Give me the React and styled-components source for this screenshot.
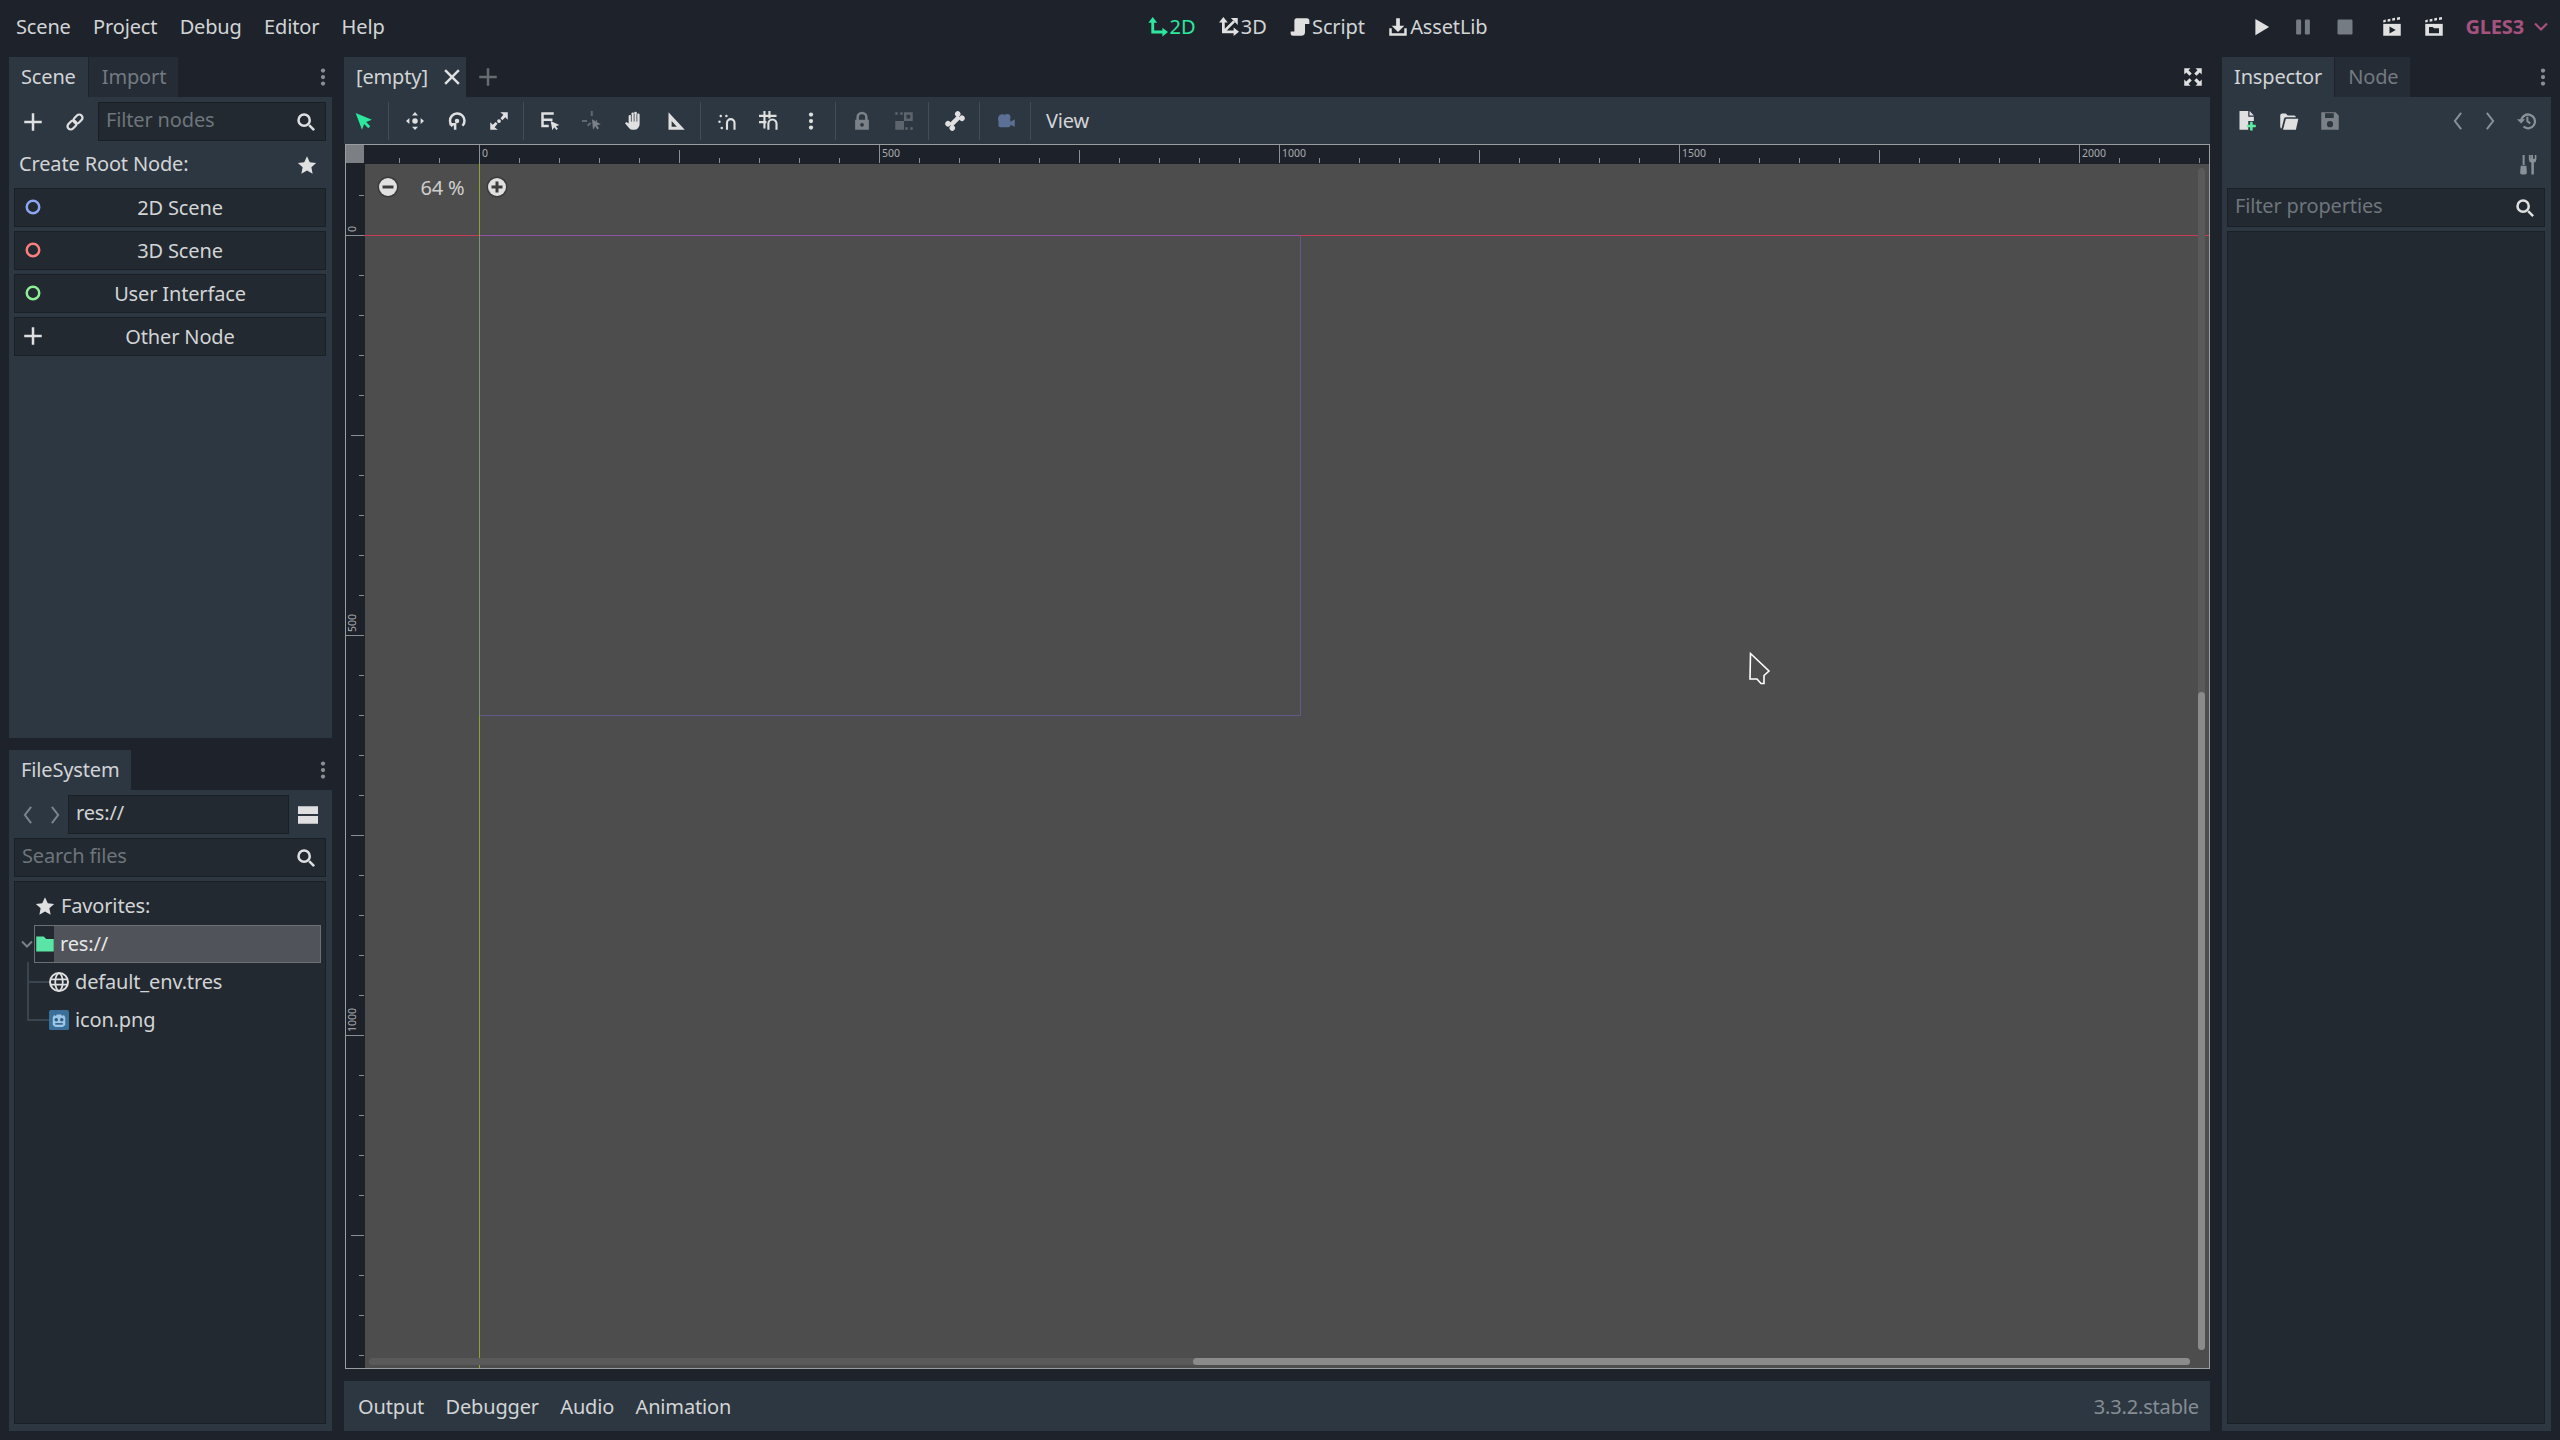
import React from 'react';
import styled, { createGlobalStyle } from 'styled-components';

const BG = '#1e232b';
const PANEL = '#2d3741';
const FIELD = '#222930';
const LINE = '#1a1e25';
const TXT = '#d2d4d6';
const DIM = '#737a81';
const ACCENT = '#2ce89f';

const Global = createGlobalStyle`
  html, body { margin: 0; padding: 0; background: ${BG}; }
  body { font-family: "Noto Sans", "Open Sans", sans-serif; font-size: 20px; letter-spacing: -0.15px; color: ${TXT}; }
  * { box-sizing: border-box; }
`;

const Page = styled.div`
  width: 2560px; height: 1440px; display: flex; flex-direction: column; overflow: hidden; background: ${BG};
`;
const TopBar = styled.header`
  height: 57px; flex: none; display: grid; grid-template-columns: 1fr auto 1fr; align-items: center; padding: 0 11px 4px 16px;
`;
const Menu = styled.nav`display: flex; gap: 22.3px;`;
const MenuItem = styled.span`line-height: 28px;`;
const Modes = styled.div`display: flex; gap: 23.5px; margin-left: 70px;`;
const Mode = styled.span`
  display: flex; align-items: center; gap: 2px; line-height: 28px; color: ${p => (p.$on ? ACCENT : TXT)};
`;
const RunBar = styled.div`display: flex; justify-content: flex-end; align-items: center;`;
const RunBtn = styled.span`
  width: 42px; margin-left: ${p => p.$gap || 0}px; display: flex; justify-content: center; align-items: center;
`;
const Driver = styled.span`
  display: flex; align-items: center; gap: 9px; margin-left: 10px; font-weight: 700; color: #a5527f;
`;
const Work = styled.main`
  flex: 1; min-height: 0; display: grid; grid-template-columns: 323px 1866px 329px; gap: 12px; padding: 0 9px 9px;
`;
const Column = styled.section`display: flex; flex-direction: column; gap: ${p => p.$gap ?? 12}px; min-height: 0;`;
const Dock = styled.div`display: flex; flex-direction: column; flex: 1; min-height: 0;`;
const TabRow = styled.div`height: 40px; flex: none; display: flex; align-items: stretch; position: relative;`;
const Tab = styled.span`
  display: flex; align-items: center; padding: 0 ${p => p.$pr ?? 12}px 0 ${p => (p.$on ? 12 : 13)}px; margin-right: 1px; gap: 14px; line-height: 28px;
  background: ${p => (p.$on ? PANEL : '#262c35')};
  color: ${p => (p.$on ? TXT : DIM)};
`;
const TabFill = styled.span`
  flex: 1; display: flex; align-items: center; justify-content: flex-end; margin-right: ${p => p.$mr ?? 0}px;
`;
const DockBody = styled.div`
  flex: 1; min-height: 0; background: ${PANEL}; padding: 5px 6px 7px 5px; display: flex; flex-direction: column; gap: 4px;
`;
const Row = styled.div`display: flex; align-items: center; height: 39px; flex: none;`;
const ToolSlot = styled.span`
  width: ${p => p.$w}px; flex: none; display: flex; justify-content: center; align-items: center;
`;
const Field = styled.div`
  flex: 1; height: 39px; display: flex; align-items: center; justify-content: space-between;
  background: ${FIELD}; border: 1px solid ${LINE}; padding: 0 9px 3px 7px; line-height: 28px;
  color: ${p => (p.$value ? TXT : '#6e757c')};
  & > svg { margin-top: 3px; }
`;
const RootHead = styled.div`
  height: 40px; flex: none; display: flex; align-items: center; justify-content: space-between; padding: 0 9px 3px 5px; margin-bottom: -1px;
  & > svg { margin-top: 3px; }
`;
const RootBtn = styled.button`
  height: 39px; flex: none; position: relative; width: 100%; font: inherit; letter-spacing: inherit; color: ${TXT};
  background: ${FIELD}; border: 1px solid ${LINE}; padding: 0 0 0 20px; line-height: 28px; text-align: center;
`;
const RootIcon = styled.span`
  position: absolute; left: 8px; top: 8px; display: flex;
`;
const Tree = styled.div`
  flex: 1; min-height: 0; background: ${FIELD}; border: 1px solid ${LINE}; padding: 5px 4px 0 0; display: flex; flex-direction: column;
`;
const TreeRow = styled.div`
  height: 38px; flex: none; display: flex; align-items: center; position: relative; line-height: 28px;
  padding-left: ${p => p.$indent}px; gap: 6px;
`;
const Selected = styled.div`
  height: 38px; flex: none; margin-left: 19px; display: flex; align-items: center; background: #50545a; border: 1px solid #6c7075;
  color: #e6e7e8; line-height: 28px; position: relative;
`;
const FolderCell = styled.span`
  width: 19px; align-self: stretch; flex: none; background: ${FIELD}; display: flex; align-items: center; justify-content: center;
`;
const SelectedLabel = styled.span`margin-left: 6px;`;
const Expander = styled.span`position: absolute; left: -16px; top: 10px; display: flex;`;
const Guide = styled.span`
  position: absolute; left: 12px; top: ${p => p.$top}px; height: ${p => p.$h}px; width: 22px;
  border-left: 2px solid #3a444e; border-bottom: 2px solid #3a444e;
`;
const Toolbar = styled.div`height: 47px; flex: none; background: ${PANEL}; display: flex; align-items: center;`;
const ToolBtn = styled.span`
  width: ${p => p.$w || 42}px; flex: none; display: flex; justify-content: center; align-items: center;
`;
const Sep = styled.span`
  width: 9px; height: 38px; flex: none; display: block; position: relative;
  &::before { content: ''; display: block; width: 1px; height: 100%; margin-left: 3px; background: #434d57; }
`;
const ViewBtn = styled.span`padding-left: 10px; line-height: 28px;`;
const Viewport = styled.div`
  flex: 1; min-height: 0; position: relative; background: #4d4d4d; overflow: hidden; margin-left: 1px;
`;
const CanvasArt = styled.svg`display: block; width: 100%; height: 100%;`;
const RulerLabel = styled.text`
  font-family: "Noto Sans", sans-serif; font-size: 10.5px; letter-spacing: 0; fill: #a9acaf;
`;
const ZoomBox = styled.div`
  position: absolute; left: 32px; top: 32px; display: flex; align-items: center; color: #cfcfcf;
`;
const ZoomText = styled.span`width: 87px; text-align: center; line-height: 20px; margin-top: 1px;`;
const ScrollTrack = styled.div`
  position: absolute; background: #5a5a5a; border-radius: 4px;
  ${p => (p.$v
    ? 'right: 5px; top: 24px; bottom: 19px; width: 7px;'
    : 'left: 24px; right: 20px; bottom: 4px; height: 7px;')}
`;
const ScrollThumb = styled.div`
  position: absolute; background: #8b8b8b; border-radius: 4px;
  ${p => (p.$v
    ? 'left: 0; right: 0; top: 524px; bottom: 0;'
    : 'top: 0; bottom: 0; left: 824px; right: 0;')}
`;
const BottomBar = styled.footer`
  height: 50px; flex: none; margin-top: 12px; background: ${PANEL}; display: flex; align-items: center; padding: 2px 11px 0 14px; gap: 21.3px; line-height: 28px;
`;
const Version = styled.span`margin-left: auto; color: #878d94;`;
const InspectorRow = styled.div`
  display: flex; align-items: center; height: 40px; flex: none; margin: ${p => (p.$tight ? '-1px -3px -1px 0' : '-1px -3px 1px -1px')};
`;
const Spacer = styled.span`flex: 1;`;
const InspectorList = styled.div`
  flex: 1; min-height: 0; background: ${FIELD}; border: 1px solid ${LINE};
`;

const Svg = styled.svg`display: block; flex: none;`;
const Icon = ({ size = 20, children, color = '#e0e0e0' }) => (
  <Svg width={size} height={size} viewBox="0 0 16 16" fill={color} stroke="none">{children}</Svg>
);

const Plus = ({ color }) => <Icon color={color}><path d="M7 1h2v6h6v2H9v6H7V9H1V7h6z" /></Icon>;
const Dots = ({ color = '#8a8f94' }) => (
  <Icon color={color}><circle cx="8" cy="2.8" r="1.7" /><circle cx="8" cy="8" r="1.7" /><circle cx="8" cy="13.2" r="1.7" /></Icon>
);
const Search = () => (
  <Icon>
    <circle cx="6.5" cy="6.5" r="4.5" fill="none" stroke="#e0e0e0" strokeWidth="2" />
    <path d="M9.8 11.2l1.4-1.4 4 4-1.4 1.4z" />
  </Icon>
);
const Star = () => <Icon><path d="M8 1l2.2 4.7 5.1.6-3.8 3.5 1 5.1L8 12.4l-4.5 2.5 1-5.1L.7 6.3l5.1-.6z" /></Icon>;
const Ring = ({ color }) => (
  <Icon><circle cx="8" cy="8" r="5" fill="none" stroke={color} strokeWidth="2" /></Icon>
);
const LinkIcon = () => (
  <Icon>
    <g fill="none" stroke="#e0e0e0" strokeWidth="1.8" transform="rotate(-45 8 8)">
      <rect x="0.6" y="5.4" width="8" height="5.2" rx="2.6" />
      <rect x="7.4" y="5.4" width="8" height="5.2" rx="2.6" />
    </g>
  </Icon>
);
const Chev = ({ left, color = '#7d848b' }) => (
  <Icon color={color}>
    <path d={left ? 'M10.5 1.5L5.5 8l5 6.5' : 'M5.5 1.5l5 6.5-5 6.5'} fill="none" stroke={color} strokeWidth="1.6" />
  </Icon>
);
const Close = () => (
  <Icon><path d="M3.2 1.8L8 6.6l4.8-4.8 1.4 1.4L9.4 8l4.8 4.8-1.4 1.4L8 9.4l-4.8 4.8-1.4-1.4L6.6 8 1.8 3.2z" /></Icon>
);
const Arrow = () => <Icon color={ACCENT}><path d="M.5 1.5l13 5.5-4.6 1.7 3.3 3.4-1.6 1.6-3.3-3.3L5.6 15z" /></Icon>;
const Move = () => (
  <Icon>
    <path d="M8 .8l2.4 2.7H5.6zM8 15.2l-2.4-2.7h4.8zM.8 8l2.7-2.4v4.8zM15.2 8l-2.7 2.4V5.6z" />
    <circle cx="8" cy="8" r="2.2" />
  </Icon>
);
const Rotate = () => (
  <Icon>
    <path d="M4.4 12.2A5.8 5.8 0 1 1 12.4 11.8" fill="none" stroke="#e0e0e0" strokeWidth="2" />
    <circle cx="8" cy="8" r="1.8" />
    <path d="M2 9.5h5.5V15H5.5v-3.5H2z" />
  </Icon>
);
const Scale = () => (
  <Icon>
    <path d="M9 1h6v6l-2-2-2.3 2.3-1.5-1.5L11.5 3zM1 15V9l2 2 2.3-2.3 1.5 1.5L4.5 13l2.5 2z" />
    <circle cx="8" cy="8" r="1.5" />
  </Icon>
);
const ListPick = () => (
  <Icon>
    <path d="M1 1h10v2H3v3h7v2H3v3h4v2H1z" />
    <path d="M8.5 8l7 3.2-2.8 1 1.6 2-1.2 1-1.7-2.2-1.5 2.3z" />
  </Icon>
);
const PickDim = () => (
  <Icon color="#61686f">
    <path d="M7 0h1.6v4H7zM0 7.2h4v1.6H0zM11 7.2h1v1.6h-1zM4 11l2.4-2 1.1 1.2L5 12.4z" />
    <path d="M8 6.5l7 4-3 .8 1.6 2.5-1.4.9-1.6-2.5L8.8 15z" fill="#7a8086" />
  </Icon>
);
const Hand = () => (
  <Icon>
    <path d="M3.7 9V4.2a1.1 1.1 0 0 1 2.2 0V2.2a1.1 1.1 0 0 1 2.2 0v-.6a1.1 1.1 0 0 1 2.2 0V3a1.1 1.1 0 0 1 2.2 0v7.6A4.4 4.4 0 0 1 7.900 15H7a3.6 3.6 0 0 1-2.8-1.3L.8 9.7l1.2-1 1.7 1.3z" />
    <path d="M5.9 3v5.5M8.1 2v6.5M10.3 2.5v6" stroke={PANEL} strokeWidth=".6" fill="none" />
  </Icon>
);
const RulerTool = () => (
  <Icon><path fillRule="evenodd" d="M2 1l13 14H2zM4.5 8v4.5h4.2z" /></Icon>
);
const Snap = () => (
  <Icon>
    <circle cx="3" cy="4" r="1" /><circle cx="7.5" cy="4" r="1" /><circle cx="2" cy="8.5" r="1" /><circle cx="3.8" cy="13.5" r="1" />
    <path d="M8 15V9.5a3 3 0 0 1 6 0V15" fill="none" stroke="#e0e0e0" strokeWidth="1.7" />
  </Icon>
);
const GridSnap = () => (
  <Icon>
    <path d="M3.5 0h1.7v14H3.5zM7.5 0h1.7v6H7.500zM0 3h14v1.7H0zM0 8h6v1.7H0z" />
    <path d="M7.5 15V10a3 3 0 0 1 6.500 0v5" fill="none" stroke="#e0e0e0" strokeWidth="1.7" />
  </Icon>
);
const Lock = () => (
  <Icon color="#7b8187">
    <path fillRule="evenodd" d="M2.5 7h1V5a4.5 4.5 0 0 1 9 0v2h1v8h-11zM5.5 7h5V5a2.5 2.5 0 0 0-5 0zM8 9.5a1.5 1.5 0 1 0 0 3 1.5 1.5 0 0 0 0-3z" />
  </Icon>
);
const GroupDim = () => (
  <Icon color="#5d646b">
    <path d="M1 8h7v7H1zM8 1h7v7H8zM10 3v3h3V3z" fillRule="evenodd" />
    <path d="M1 1h2v2H1zM5 1h2v2H5z" />
    <path d="M13 13h2v2h-2zM9 13h2v2H9z" />
  </Icon>
);
const Bone = () => (
  <Icon>
    <g transform="rotate(-45 8 8)">
      <rect x="3" y="6.2" width="10" height="3.6" />
      <circle cx="2.5" cy="5.6" r="2.2" /><circle cx="2.5" cy="10.4" r="2.2" />
      <circle cx="13.5" cy="5.6" r="2.2" /><circle cx="13.5" cy="10.4" r="2.2" />
    </g>
  </Icon>
);
const Camera = () => (
  <Icon color="#5b7094">
    <circle cx="5" cy="6" r="3.4" /><circle cx="9" cy="5" r="2.6" />
    <rect x="2" y="6" width="9.5" height="7" rx="1.4" />
    <path d="M11 9l4-2.4v6L11 10.8z" />
  </Icon>
);
const Axis2D = ({ color }) => (
  <Icon color={color}>
    <path d="M3.8 3V12H13" fill="none" stroke={color} strokeWidth="2.3" />
    <path d="M3.8 0l3.5 4.5H.3zM16 12l-4.5 3.5v-7z" />
  </Icon>
);
const Axis3D = () => (
  <Icon>
    <path d="M3.5 3V11.8H13M4 11.5L12 3.5" fill="none" stroke="#e0e0e0" strokeWidth="2.2" />
    <path d="M3.5 0L7 4.3H0zM16 11.8l-4.3 3.4V8.4zM15 .8v5.5L9.5.8z" />
  </Icon>
);
const ScriptIcon = () => (
  <Icon>
    <path d="M5 1h8.5a2 2 0 0 1 2 2v2.5H12V12a3 3 0 0 1-3 3H2.5a2 2 0 0 1-2-2v-1.500h3V3A2 2 0 0 1 5 1z" />
  </Icon>
);
const Download = () => (
  <Icon>
    <path d="M6.5 1h3v6H13l-5 5-5-5h3.5z" />
    <path d="M1 9h2v4h10V9h2v6H1z" />
  </Icon>
);
const Play = () => <Icon><path d="M3.5 1.5L14.5 8 3.5 14.5z" /></Icon>;
const Pause = () => <Icon color="#767c83"><rect x="2.5" y="2" width="4" height="12" rx="1" /><rect x="9.5" y="2" width="4" height="12" rx="1" /></Icon>;
const Stop = () => <Icon color="#767c83"><rect x="2" y="2" width="12" height="12" rx="1" /></Icon>;
const Clapper = ({ folder }) => (
  <Icon>
    <path d="M1 2.5l2-.5v2l-2 .4zM4.5 1.7l2.2-.4v2l-2.2.4zM8.2 1l2.2-.4v2l-2.2.4zM12 .3l2.4-.3v2l-2.4.4z" />
    <path fillRule="evenodd" d="M1 5.5h14V15H1z" />
    {folder
      ? <path d="M4 8h3l1 1h4v4H4z" fill={BG} />
      : <path d="M6 7.5l5 2.8-5 2.8z" fill={BG} />}
  </Icon>
);
const ChevDown = ({ color }) => (
  <Icon color={color} size={16}>
    <path d="M2 4.5l6 6 6-6" fill="none" stroke={color} strokeWidth="2.2" />
  </Icon>
);
const Fullscreen = () => (
  <Icon>
    <path d="M1 1h5L4.4 2.6 7 5.2 5.2 7 2.6 4.4 1 6zM15 1v5l-1.6-1.6L10.8 7 9 5.2l2.6-2.6L10 1zM1 15v-5l1.6 1.6L5.2 9 7 10.8l-2.6 2.6L6 15zM15 15h-5l1.6-1.6L9 10.8 10.8 9l2.6 2.6L15 10z" />
  </Icon>
);
const NewRes = () => (
  <Icon>
    <path d="M2 0h7v4.5h4.5V8H9v7H2z" /><path d="M10 0l3.5 3.5H10z" />
    <path fill="#5ef0a0" d="M10.5 8.5h2V11H15v2h-2.5v2.5h-2V13H8v-2h2.5z" />
  </Icon>
);
const OpenFolder = () => (
  <Icon>
    <path fillRule="evenodd" d="M1 3.5A1.5 1.5 0 0 1 2.5 2h3L7 3.5h5A1.5 1.5 0 0 1 13.5 5h-8a1.5 1.5 0 0 0-1.4 1L2 14h.5A1.5 1.5 0 0 1 1 12.5z" />
    <path d="M5.500 6.200H15.500L13.500 15H3.200z" />
  </Icon>
);
const Save = () => (
  <Icon color="#7b8187">
    <path fillRule="evenodd" d="M1 1h11.5L15 3.500V15H1zM4 1.800v3.700h7V1.800zM8 8a2.500 2.500 0 1 0 0 5 2.500 2.500 0 0 0 0-5z" />
  </Icon>
);
const History = () => (
  <Icon color="#8a9097">
    <path d="M3.4 8A5.500 5.500 0 1 1 5.200 12.400" fill="none" stroke="#8a9097" strokeWidth="1.8" />
    <path d="M0 6.500h6.500L3.300 10zM7.500 4.500h1.600v3.200l2 1.600-1 1.200-2.600-2z" />
  </Icon>
);
const Tools = () => (
  <Icon color="#8a9097">
    <path d="M4.500 0h1.600v8H4.500zM3 8.500h4.500l.4 5.500a1.500 1.500 0 0 1-1.500 1.500H4A1.500 1.500 0 0 1 2.500 14z" />
    <path d="M9.500 0v3.500a2.500 2.500 0 0 0 2 2.400v9.600h2V5.900a2.500 2.500 0 0 0 2-2.400V0h-1.300v3h-1.400V0h-1.500v3H11V0z" />
  </Icon>
);
const ListMode = () => (
  <Icon><rect x="0" y="1" width="16" height="6.2" /><rect x="0" y="8.8" width="16" height="6.2" /></Icon>
);
const Folder = () => (
  <Icon color="#5ae5a6"><path d="M1 2h6l2 2h6v10H1z" /></Icon>
);
const ChevSmall = () => (
  <Icon size={16} color="#7a8188"><path d="M3 5.500l5 5 5-5" fill="none" stroke="#7a8188" strokeWidth="2" /></Icon>
);
const Globe = () => (
  <Icon>
    <path fillRule="evenodd" d="M8 0a8 8 0 1 1 0 16A8 8 0 0 1 8 0zM8 1.600a6.400 6.400 0 1 0 0 12.800A6.400 6.400 0 0 0 8 1.600z" />
    <path d="M1.500 5.200h13v1.400h-13zM1.500 9.400h13v1.400h-13z" />
    <ellipse cx="8" cy="8" rx="3" ry="7" fill="none" stroke="#e0e0e0" strokeWidth="1.4" />
  </Icon>
);
const GodotPng = () => (
  <Icon size={20}>
    <rect x="0" y="0" width="16" height="16" rx="1.5" fill="#3a6f9a" />
    <path d="M3 6l1-2 1.500.8.800-1.300h3.400l.8 1.300L12 4l1 2v6l-2 1.500H5L3 12z" fill="#9cc6e6" />
    <circle cx="5.8" cy="7.8" r="1.4" fill="#2d5c85" /><circle cx="10.2" cy="7.8" r="1.4" fill="#2d5c85" />
    <rect x="5" y="10.5" width="6" height="1.2" fill="#2d5c85" />
  </Icon>
);
const RoundBtn = ({ plus }) => (
  <Svg width="22" height="22" viewBox="0 0 22 22">
    <circle cx="11" cy="11" r="10.5" fill="#3a3a3a" />
    <circle cx="11" cy="11" r="9" fill="#e0e0e0" />
    <rect x="5.5" y="9.5" width="11" height="3" fill="#3c3c3c" />
    {plus && <rect x="9.5" y="5.5" width="3" height="11" fill="#3c3c3c" />}
  </Svg>
);

const X0 = 345, Y0 = 144, X1 = 2209, Y1 = 1368, OX = 479, OY = 235;
const range = (a, b, s) => { const r = []; for (let v = a; v <= b; v += s) r.push(v); return r; };

const CanvasDrawing = () => (
  <CanvasArt viewBox={`${X0} ${Y0} ${X1 - X0 + 1} ${Y1 - Y0 + 1}`} preserveAspectRatio="none" shapeRendering="crispEdges">
    <rect x="345" y="144" width="1865" height="19.5" fill="#1d2129" />
    <rect x="345" y="144" width="19.5" height="1225" fill="#1d2129" />
    <line x1="1300.5" y1="235" x2="1300.5" y2="715.5" stroke="#625890" />
    <line x1="479" y1="715.5" x2="1300" y2="715.5" stroke="#625890" />
    <line x1="364" y1="235.5" x2="2209" y2="235.5" stroke="#c93a54" />
    <line x1="479" y1="235.5" x2="1300" y2="235.5" stroke="#944fa6" />
    <line x1="479.5" y1="163" x2="479.5" y2="1368" stroke="#8aa52d" />
    <line x1="479.5" y1="236" x2="479.5" y2="715" stroke="#7b9377" />
    {range(399, X1, 40).map(x => {
      const d = x - OX;
      const top = d % 400 === 0 ? 145 : d % 200 === 0 ? 150 : 158;
      return <line key={x} x1={x + 0.5} x2={x + 0.5} y1={top} y2="163" stroke="#8b8e92" />;
    })}
    {range(195, Y1 - 2, 40).map(y => {
      const d = y - OY;
      const left = d % 400 === 0 ? 346 : d % 200 === 0 ? 351 : 359;
      return <line key={y} y1={y + 0.5} y2={y + 0.5} x1={left} x2="364" stroke="#8b8e92" />;
    })}
    {range(0, 4, 1).map(i => (
      <RulerLabel key={i} x={OX + 3 + 400 * i} y="156.5" shapeRendering="auto">{i * 500}</RulerLabel>
    ))}
    {range(0, 2, 1).map(i => (
      <RulerLabel key={i} transform={`translate(356 ${OY - 3 + 400 * i}) rotate(-90)`}>{i * 500}</RulerLabel>
    ))}
    <rect x="345" y="144" width="1865" height="1" fill="#9a9da0" />
    <rect x="345" y="144" width="1" height="1225" fill="#9a9da0" />
    <rect x="345" y="1368" width="1865" height="1" fill="#9a9da0" />
    <rect x="2209" y="144" width="1" height="1225" fill="#9a9da0" />
    <rect x="346" y="145" width="18" height="18" fill="#7c7f83" />
    <path d="M1750.5 653.5L1769 671l-5 4.500v8h-3l-4-4.500h-7z" fill="#4d4d4d" stroke="#fff" strokeWidth="1.6" shapeRendering="auto" />
  </CanvasArt>
);

const rootButtons = [
  ['2D Scene', <Ring color="#8da5f3" />],
  ['3D Scene', <Ring color="#fc7f7f" />],
  ['User Interface', <Ring color="#8eef97" />],
  ['Other Node', <Plus />],
];

export default function App() {
  return (
    <Page>
      <Global />
      <TopBar>
        <Menu>
          {['Scene', 'Project', 'Debug', 'Editor', 'Help'].map(m => <MenuItem key={m}>{m}</MenuItem>)}
        </Menu>
        <Modes>
          <Mode $on><Axis2D color={ACCENT} />2D</Mode>
          <Mode><Axis3D />3D</Mode>
          <Mode><ScriptIcon />Script</Mode>
          <Mode><Download />AssetLib</Mode>
        </Modes>
        <RunBar>
          <RunBtn><Play /></RunBtn>
          <RunBtn><Pause /></RunBtn>
          <RunBtn><Stop /></RunBtn>
          <RunBtn $gap={5}><Clapper /></RunBtn>
          <RunBtn><Clapper folder /></RunBtn>
          <Driver>GLES3<ChevDown color="#a5527f" /></Driver>
        </RunBar>
      </TopBar>
      <Work>
        <Column>
          <Dock>
            <TabRow>
              <Tab $on>Scene</Tab>
              <Tab>Import</Tab>
              <TabFill $mr={-1}><Dots /></TabFill>
            </TabRow>
            <DockBody>
              <Row>
                <ToolSlot $w={37}><Plus /></ToolSlot>
                <ToolSlot $w={47}><LinkIcon /></ToolSlot>
                <Field>Filter nodes<Search /></Field>
              </Row>
              <RootHead>Create Root Node:<Star /></RootHead>
              {rootButtons.map(([label, icon]) => (
                <RootBtn key={label}><RootIcon>{icon}</RootIcon>{label}</RootBtn>
              ))}
            </DockBody>
          </Dock>
          <Dock>
            <TabRow>
              <Tab $on>FileSystem</Tab>
              <TabFill $mr={-1}><Dots /></TabFill>
            </TabRow>
            <DockBody>
              <Row>
                <ToolSlot $w={27}><Chev left /></ToolSlot>
                <ToolSlot $w={27}><Chev /></ToolSlot>
                <Field $value>res://</Field>
                <ToolSlot $w={37}><ListMode /></ToolSlot>
              </Row>
              <Row><Field>Search files<Search /></Field></Row>
              <Tree>
                <TreeRow $indent={20}><Star />Favorites:</TreeRow>
                <Selected>
                  <Expander><ChevSmall /></Expander>
                  <FolderCell><Folder /></FolderCell>
                  <SelectedLabel>res://</SelectedLabel>
                </Selected>
                <TreeRow $indent={34}><Guide $top={-1} $h={21} /><Globe />default_env.tres</TreeRow>
                <TreeRow $indent={34}><Guide $top={-19} $h={39} /><GodotPng />icon.png</TreeRow>
              </Tree>
            </DockBody>
          </Dock>
        </Column>
        <Column $gap={0}>
          <TabRow>
            <Tab $on $pr={4}>[empty]<Close /></Tab>
            <ToolSlot $w={42}><Plus color="#666c72" /></ToolSlot>
            <TabFill $mr={7}><Fullscreen /></TabFill>
          </TabRow>
          <Toolbar>
            <ToolBtn $w={41}><Arrow /></ToolBtn><Sep />
            <ToolBtn><Move /></ToolBtn><ToolBtn><Rotate /></ToolBtn><ToolBtn><Scale /></ToolBtn><Sep />
            <ToolBtn><ListPick /></ToolBtn><ToolBtn><PickDim /></ToolBtn><ToolBtn><Hand /></ToolBtn><ToolBtn><RulerTool /></ToolBtn><Sep />
            <ToolBtn><Snap /></ToolBtn><ToolBtn><GridSnap /></ToolBtn><ToolBtn><Dots color="#e0e0e0" /></ToolBtn><Sep />
            <ToolBtn><Lock /></ToolBtn><ToolBtn><GroupDim /></ToolBtn><Sep />
            <ToolBtn><Bone /></ToolBtn><Sep />
            <ToolBtn><Camera /></ToolBtn><Sep />
            <ViewBtn>View</ViewBtn>
          </Toolbar>
          <Viewport>
            <CanvasDrawing />
            <ZoomBox>
              <RoundBtn /><ZoomText>64 %</ZoomText><RoundBtn plus />
            </ZoomBox>
            <ScrollTrack $v><ScrollThumb $v /></ScrollTrack>
            <ScrollTrack><ScrollThumb /></ScrollTrack>
          </Viewport>
          <BottomBar>
            <span>Output</span><span>Debugger</span><span>Audio</span><span>Animation</span>
            <Version>3.3.2.stable</Version>
          </BottomBar>
        </Column>
        <Column>
          <Dock>
            <TabRow>
              <Tab $on>Inspector</Tab>
              <Tab>Node</Tab>
              <TabFill $mr={-2}><Dots /></TabFill>
            </TabRow>
            <DockBody>
              <InspectorRow>
                <ToolSlot $w={42}><NewRes /></ToolSlot>
                <ToolSlot $w={41}><OpenFolder /></ToolSlot>
                <ToolSlot $w={42}><Save /></ToolSlot>
                <Spacer />
                <ToolSlot $w={32}><Chev left color="#8a9097" /></ToolSlot>
                <ToolSlot $w={32}><Chev color="#8a9097" /></ToolSlot>
                <ToolSlot $w={42}><History /></ToolSlot>
              </InspectorRow>
              <InspectorRow $tight>
                <Spacer /><ToolSlot $w={42}><Tools /></ToolSlot>
              </InspectorRow>
              <Row><Field>Filter properties<Search /></Field></Row>
              <InspectorList />
            </DockBody>
          </Dock>
        </Column>
      </Work>
    </Page>
  );
}
